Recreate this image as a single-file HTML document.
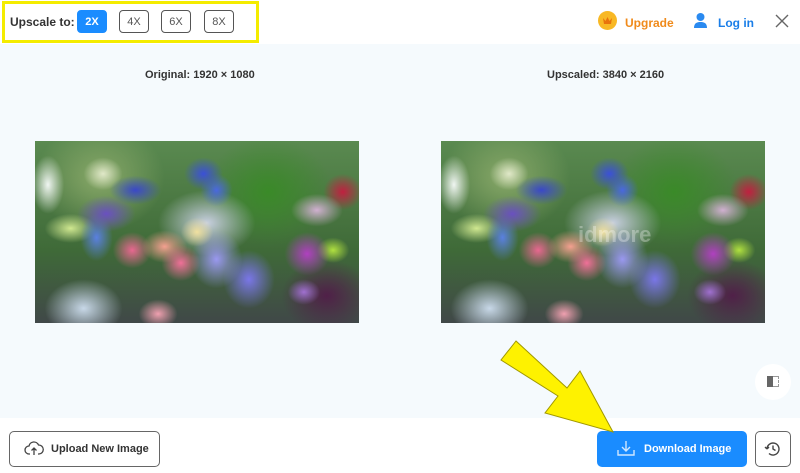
<!DOCTYPE html>
<html><head><meta charset="utf-8"><style>
*{margin:0;padding:0;box-sizing:border-box}
body{width:800px;height:473px;background:#fff;font-family:"Liberation Sans",Arial,sans-serif;position:relative;overflow:hidden}
.abs{position:absolute}
.hl{left:2px;top:1px;width:257px;height:42px;border:3px solid #f4ec00}
.lab{left:10px;top:15px;font-size:12px;font-weight:bold;color:#333}
.sb{top:10px;width:30px;height:23px;border:1px solid #555;border-radius:4px;font-size:11px;color:#555;text-align:center;line-height:22px}
.sb.on{background:#1a8cff;border-color:#1a8cff;color:#fff;font-weight:bold}
.main{left:0;top:44px;width:800px;height:374px;background:#f5fafd}
.cap{font-size:11px;font-weight:bold;color:#333;top:69px}
.ph{top:141px;width:324px;height:182px;background:
radial-gradient(ellipse 6% 10% at 45% 67%,#f07098,transparent),
radial-gradient(ellipse 7% 9% at 40% 58%,#f4a090,transparent),
radial-gradient(ellipse 6% 10% at 30% 60%,#e86890,transparent),
radial-gradient(ellipse 5% 8% at 50% 50%,#f0e0a0,transparent),
radial-gradient(ellipse 8% 16% at 56% 65%,#9a98f0,transparent),
radial-gradient(ellipse 8% 16% at 66% 76%,#7a76e8,transparent),
radial-gradient(ellipse 8% 8% at 31% 27%,#3a48c8,transparent),
radial-gradient(ellipse 6% 9% at 52% 18%,#3b50d8,transparent),
radial-gradient(ellipse 5% 9% at 56% 27%,#4a68e0,transparent),
radial-gradient(ellipse 9% 10% at 22% 40%,#6a50c0,transparent),
radial-gradient(ellipse 5% 13% at 19% 53%,#5a80e0,transparent),
radial-gradient(ellipse 8% 8% at 11% 48%,#d0e890,transparent),
radial-gradient(ellipse 6% 9% at 21% 18%,#e0e8c8,transparent),
radial-gradient(ellipse 5% 16% at 4% 24%,#f0f6f2,transparent),
radial-gradient(ellipse 7% 12% at 84% 62%,#b040c0,transparent),
radial-gradient(ellipse 5% 7% at 83% 83%,#a070d0,transparent),
radial-gradient(ellipse 5% 7% at 92% 60%,#b0e040,transparent),
radial-gradient(ellipse 8% 9% at 87% 38%,#d0b0d0,transparent),
radial-gradient(ellipse 6% 10% at 95% 28%,#c02040,transparent),
radial-gradient(ellipse 15% 18% at 53% 45%,#c8d0e0,transparent),
radial-gradient(ellipse 12% 16% at 15% 92%,#c8d8e8,transparent),
radial-gradient(ellipse 6% 8% at 38% 95%,#f0a0b0,transparent),
radial-gradient(ellipse 14% 20% at 90% 85%,#502048,transparent),
radial-gradient(ellipse 20% 30% at 72% 28%,#3a8a28,transparent),
radial-gradient(ellipse 20% 30% at 20% 20%,#88a868,transparent),
linear-gradient(#5a8a50,#3f6a38 60%,#404848)}
.top{top:16px;font-size:12px;font-weight:bold}
.btm{top:431px;height:36px;border-radius:5px}
</style></head><body>
<div class="abs hl"></div>
<div class="abs lab">Upscale to:</div>
<div class="abs sb on" style="left:77px">2X</div>
<div class="abs sb" style="left:119px">4X</div>
<div class="abs sb" style="left:161px">6X</div>
<div class="abs sb" style="left:204px">8X</div>
<div class="abs" style="left:598px;top:11px;width:19px;height:19px;border-radius:50%;background:#f8b824"></div>
<svg class="abs" style="left:602px;top:16px" width="11" height="9"><path d="M1 2l2.5 3L5.5 1l2 4L10 2l-1 6H2z" fill="#e8740c"/></svg>
<div class="abs top" style="left:625px;color:#f08a1a">Upgrade</div>
<svg class="abs" style="left:693px;top:12px" width="15" height="17"><circle cx="7.5" cy="5" r="4" fill="#2a8af0"/><path d="M1 16c0-5 3-6 6.5-6s6.5 1 6.5 6z" fill="#2a8af0"/></svg>
<div class="abs top" style="left:718px;color:#1a7ee8">Log in</div>
<svg class="abs" style="left:775px;top:14px" width="14" height="14"><path d="M1 1l12 12M13 1L1 13" stroke="#666" stroke-width="1.4"/></svg>
<div class="abs main"></div>
<div class="abs cap" style="left:145px">Original: 1920 × 1080</div>
<div class="abs cap" style="left:547px">Upscaled: 3840 × 2160</div>
<div class="abs ph" style="left:35px"></div>
<div class="abs ph" style="left:441px"></div>
<div class="abs" style="left:578px;top:222px;font-size:22px;font-weight:bold;color:rgba(255,255,255,.3)">idmore</div>
<div class="abs" style="left:755px;top:364px;width:36px;height:36px;border-radius:50%;background:#fff"></div>
<div class="abs" style="left:767px;top:376px;width:6px;height:11px;background:#666"></div>
<div class="abs" style="left:773px;top:376px;width:6px;height:11px;border:1px dashed #999;border-left:0"></div>
<div class="abs btm" style="left:9px;width:151px;border:1px solid #666"></div>
<svg class="abs" style="left:24px;top:440px" width="20" height="17"><path d="M6 14H5a4 4 0 0 1 0-8 5 5 0 0 1 9.5-1A4 4 0 0 1 15 14h-1M10 15V8M7.5 10.5 10 8l2.5 2.5" fill="none" stroke="#444" stroke-width="1.3"/></svg>
<div class="abs" style="left:51px;top:443px;font-size:11px;font-weight:bold;color:#333">Upload New Image</div>
<div class="abs btm" style="left:597px;width:150px;background:#1a8cff"></div>
<svg class="abs" style="left:617px;top:440px" width="18" height="17"><path d="M9 1v10M5 7l4 4 4-4M1 10v5h16v-5" fill="none" stroke="#cfe6ff" stroke-width="1.4"/></svg>
<div class="abs" style="left:644px;top:443px;font-size:11px;font-weight:bold;color:#fff">Download Image</div>
<div class="abs btm" style="left:755px;width:36px;border:1px solid #666"></div>
<svg class="abs" style="left:764px;top:440px" width="18" height="18"><path d="M3 9a6 6 0 1 1 2 4.5M3 9 1 7M3 9l2-2M9 5.5V9l2.5 1.5" fill="none" stroke="#444" stroke-width="1.4"/></svg>
<svg class="abs" style="left:0;top:0" width="800" height="473"><polygon points="516,341 501,360 558,396 545,413 613,432 580,371 567,388" fill="#fef200" stroke="#a09800" stroke-width="1"/></svg>
</body></html>
